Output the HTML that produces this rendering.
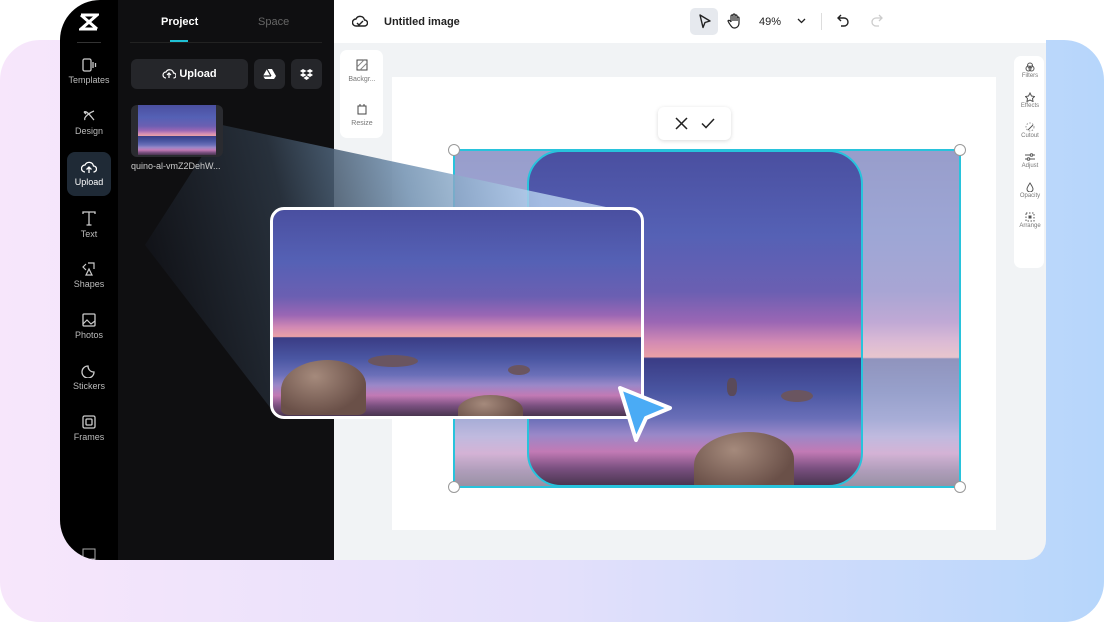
<!DOCTYPE html>
<html><head><meta charset="utf-8"><style>
*{margin:0;padding:0;box-sizing:border-box}
body{width:1104px;height:622px;overflow:hidden;background:#fff;font-family:"Liberation Sans",sans-serif;position:relative}
.abs{position:absolute}
.bg{left:0;top:40px;width:1104px;height:582px;border-radius:40px;background:linear-gradient(90deg,#f7e6fb 0%,#e4e0fb 50%,#b6d6fb 100%)}
.app{left:60px;top:0;width:986px;height:560px;background:#f1f3f5;border-radius:40px 0 20px 40px;overflow:hidden}
.side{left:0;top:0;width:58px;height:560px;background:#000}
.panel{left:58px;top:0;width:216px;height:560px;background:#0f0f11}
.top{left:274px;top:0;width:712px;height:43px;background:#fff}
.nav{width:58px;text-align:center;color:#bbb;font-size:9px;left:0}
.nav svg{display:block;margin:0 auto 3px}
.scene{background:linear-gradient(180deg,#4a4fa0 0%,#5561b5 25%,#6b5fb2 42%,#9a66b4 51%,#d28ab4 57%,#eaa0a6 61.5%,#3a3c85 62%,#4a56a2 72%,#6a6fb8 80%,#9a88c8 85%,#c27ab5 90%,#7a5080 95%,#4a3550 100%)}
.rt{font-size:6px;color:#777;text-align:center;width:30px}
.rt svg{display:block;margin:0 auto 1px}
.rock{background:radial-gradient(ellipse at 40% 30%,#a58a7c,#6a5048 70%)}
</style></head><body>
<div class="abs bg"></div>
<div class="abs app">
 <div class="abs side">
  <svg class="abs" style="left:19px;top:13px" width="20" height="18" viewBox="0 0 20 18"><path d="M2 2h16L2 16h16M2 2l16 14" stroke="#fff" stroke-width="3" fill="none"/></svg>
  <div class="abs" style="left:17px;top:42px;width:24px;height:1px;background:#333"></div>
  <div class="abs nav" style="top:58px"><svg width="16" height="14"><rect x="2" y="1" width="8" height="12" rx="1.5" stroke="#ccc" fill="none" stroke-width="1.3"/><path d="M12 4v6M14.5 5v4" stroke="#ccc" stroke-width="1.3"/></svg>Templates</div>
  <div class="abs nav" style="top:109px"><svg width="16" height="14"><path d="M3 3c3-2 8 6 10 8M4 11c-2-3 6-8 9-9M3 3l2 2" stroke="#ccc" fill="none" stroke-width="1.3"/></svg>Design</div>
  <div class="abs" style="left:7px;top:152px;width:44px;height:44px;border-radius:8px;background:#1f2a36"></div>
  <div class="abs nav" style="top:160px;color:#fff"><svg width="16" height="14"><path d="M4 12a3.5 3.5 0 0 1 0-7 4.5 4.5 0 0 1 8.5 1 3 3 0 0 1 0 6M8 13V7M5.5 9.5L8 7l2.5 2.5" stroke="#fff" fill="none" stroke-width="1.3"/></svg>Upload</div>
  <div class="abs nav" style="top:211px"><svg width="16" height="15"><path d="M2 3V1h12v2M8 1v13M5.5 14h5" stroke="#ccc" fill="none" stroke-width="1.3"/></svg>Text</div>
  <div class="abs nav" style="top:262px"><svg width="16" height="14"><path d="M5 2l-3 3 3 3M7 1h6v6M5 13l3-6 3 6z" stroke="#ccc" fill="none" stroke-width="1.2"/></svg>Shapes</div>
  <div class="abs nav" style="top:313px"><svg width="16" height="14"><rect x="2" y="1" width="12" height="12" rx="1" stroke="#ccc" fill="none" stroke-width="1.3"/><path d="M2 11l4-4 4 4 4-3" stroke="#ccc" fill="none" stroke-width="1.2"/></svg>Photos</div>
  <div class="abs nav" style="top:364px"><svg width="16" height="14"><path d="M13 8A6 6 0 1 1 7 2c0 3 2 6 6 6z" stroke="#ccc" fill="none" stroke-width="1.3"/></svg>Stickers</div>
  <div class="abs nav" style="top:415px"><svg width="16" height="14"><rect x="2" y="1" width="12" height="12" rx="1.5" stroke="#ccc" fill="none" stroke-width="1.3"/><rect x="5" y="4" width="6" height="6" rx="1" stroke="#ccc" fill="none" stroke-width="1.3"/></svg>Frames</div>
  <svg class="abs" style="left:22px;top:548px" width="14" height="12"><rect x="1" y="1" width="12" height="10" stroke="#aaa" fill="none"/></svg>
 </div>
 <div class="abs panel">
  <div class="abs" style="left:43px;top:16px;color:#fff;font-size:11px;font-weight:bold">Project</div>
  <div class="abs" style="left:140px;top:16px;color:#666;font-size:11px">Space</div>
  <div class="abs" style="left:52px;top:40px;width:18px;height:2px;background:#1fc0d4"></div>
  <div class="abs" style="left:12px;top:42px;width:192px;height:1px;background:#222"></div>
  <div class="abs" style="left:13px;top:59px;width:117px;height:30px;border-radius:6px;background:#25262a;color:#fff;font-size:11px;font-weight:bold;line-height:30px;text-align:center"><svg width="14" height="12" style="vertical-align:-2px;margin-right:3px"><path d="M4 11a3 3 0 0 1 0-6 4 4 0 0 1 7.5 1 2.5 2.5 0 0 1 0 5M7 11V6M5 8l2-2 2 2" stroke="#fff" fill="none" stroke-width="1.2"/></svg>Upload</div>
  <div class="abs" style="left:136px;top:59px;width:31px;height:30px;border-radius:6px;background:#25262a"><svg class="abs" style="left:9px;top:9px" width="13" height="12"><path d="M4 1h5l4 7-2 3H2L0 8z" fill="#fff"/><path d="M4 1l4 7M0 8h8" stroke="#25262a" stroke-width="1.2"/></svg></div>
  <div class="abs" style="left:173px;top:59px;width:31px;height:30px;border-radius:6px;background:#25262a"><svg class="abs" style="left:9px;top:9px" width="13" height="12"><path d="M3 1l3.5 2L3 5 0 3zM10 1l3 2-3 2-3.5-2zM3 5l3.5 2L3 9 0 7zM10 5l3 2-3 2-3.5-2zM3.5 10l3-2 3 2-3 2z" fill="#fff"/></svg></div>
 </div>
 <div class="abs top">
  <svg class="abs" style="left:18px;top:14px" width="16" height="14"><path d="M4 12a3.5 3.5 0 0 1 0-7 4.5 4.5 0 0 1 8.5 1 3 3 0 0 1 0 6zM5 9l2 2 4-4" stroke="#222" fill="none" stroke-width="1.4"/></svg>
  <div class="abs" style="left:50px;top:16px;font-size:11px;color:#222;font-weight:bold">Untitled image</div>
  <div class="abs" style="left:356px;top:8px;width:28px;height:27px;border-radius:5px;background:#e6e9ee"></div>
  <svg class="abs" style="left:364px;top:14px" width="14" height="15"><path d="M2 1l10 6-5 1.5-2 5z" stroke="#222" fill="none" stroke-width="1.4" stroke-linejoin="round"/></svg>
  <svg class="abs" style="left:393px;top:13px" width="14" height="16"><path d="M4 9V3a1 1 0 0 1 2 0v5V2a1 1 0 0 1 2 0v6V3a1 1 0 0 1 2 0v5V5a1 1 0 0 1 2 0v5c0 3-2 5-4.5 5S4 13 2 10l-1-2c0-1 2-1 3 1" stroke="#222" fill="none" stroke-width="1.2"/></svg>
  <div class="abs" style="left:425px;top:16px;font-size:11px;color:#222">49%</div>
  <svg class="abs" style="left:463px;top:18px" width="9" height="6"><path d="M1 1l3.5 3.5L8 1" stroke="#222" fill="none" stroke-width="1.3"/></svg>
  <div class="abs" style="left:487px;top:13px;width:1px;height:17px;background:#ddd"></div>
  <svg class="abs" style="left:503px;top:14px" width="13" height="14"><path d="M4 1L1 4l3 3M1 4h6a4 4 0 0 1 0 8H4" stroke="#222" fill="none" stroke-width="1.4"/></svg>
  <svg class="abs" style="left:536px;top:14px" width="13" height="14"><path d="M9 1l3 3-3 3M12 4H6a4 4 0 0 0 0 8h3" stroke="#ccc" fill="none" stroke-width="1.3"/></svg>
 </div>
 <div class="abs" style="left:280px;top:50px;width:43px;height:88px;border-radius:7px;background:#fff"></div>
 <svg class="abs" style="left:296px;top:59px" width="12" height="12"><rect x="1" y="1" width="10" height="10" stroke="#444" fill="none"/><path d="M1 8l7-7M4 11l7-7" stroke="#888"/></svg>
 <div class="abs rt" style="left:287px;top:76px;font-size:7px">Backgr...</div>
 <svg class="abs" style="left:296px;top:103px" width="12" height="12"><path d="M2 3h8v8H2zM4 1v2M8 1v2" stroke="#444" fill="none"/></svg>
 <div class="abs rt" style="left:287px;top:120px;font-size:7px">Resize</div>
 <div class="abs" style="left:332px;top:77px;width:604px;height:453px;background:#fff"></div>
 <div class="abs" style="left:954px;top:56px;width:30px;height:212px;border-radius:7px;background:#fff"></div>
</div>
<div class="abs rt" style="left:1015px;top:62px"><svg width="10" height="10"><circle cx="5" cy="3.5" r="2.5" stroke="#555" fill="none"/><circle cx="3.5" cy="6.5" r="2.5" stroke="#555" fill="none"/><circle cx="6.5" cy="6.5" r="2.5" stroke="#555" fill="none"/></svg>Filters</div>
<div class="abs rt" style="left:1015px;top:92px"><svg width="10" height="10"><path d="M5 1l1.5 3 3 .5-2 2 .5 3L5 8 2 9.5l.5-3-2-2 3-.5z" stroke="#555" fill="none"/></svg>Effects</div>
<div class="abs rt" style="left:1015px;top:122px"><svg width="10" height="10"><circle cx="5" cy="5" r="4" stroke="#999" stroke-dasharray="1.5" fill="none"/><path d="M3 8l5-5" stroke="#555"/></svg>Cutout</div>
<div class="abs rt" style="left:1015px;top:152px"><svg width="10" height="10"><path d="M0 3h10M0 7h10" stroke="#555"/><circle cx="6.5" cy="3" r="1.3" fill="#fff" stroke="#555"/><circle cx="3.5" cy="7" r="1.3" fill="#fff" stroke="#555"/></svg>Adjust</div>
<div class="abs rt" style="left:1015px;top:182px"><svg width="10" height="10"><path d="M5 1C3 4 2 5.5 2 7a3 3 0 0 0 6 0c0-1.5-1-3-3-6z" stroke="#555" fill="none"/></svg>Opacity</div>
<div class="abs rt" style="left:1015px;top:212px"><svg width="10" height="10"><rect x="1" y="1" width="8" height="8" stroke="#555" stroke-dasharray="1.5" fill="none"/><rect x="3.5" y="3.5" width="3" height="3" fill="#555"/></svg>Arrange</div>
<div class="abs" style="left:658px;top:107px;width:73px;height:33px;border-radius:6px;background:#fff;box-shadow:0 1px 4px rgba(0,0,0,.15)"></div>
<svg class="abs" style="left:675px;top:117px" width="13" height="13"><path d="M1 1l11 11M12 1L1 12" stroke="#222" stroke-width="1.5"/></svg>
<svg class="abs" style="left:701px;top:118px" width="14" height="11"><path d="M1 5.5l4 4L13 1" stroke="#222" stroke-width="1.5" fill="none"/></svg>
<div class="abs scene" style="left:454px;top:150px;width:506px;height:337px"></div>
<div class="abs" style="left:454px;top:150px;width:506px;height:337px;background:rgba(230,236,245,.5)"></div>
<div class="abs scene" style="left:527px;top:150px;width:336px;height:337px;border-radius:34px;border:2px solid #28c3dc;overflow:hidden">
 <div class="abs rock" style="left:165px;top:280px;width:100px;height:60px;border-radius:55% 45% 10% 10%"></div>
 <div class="abs" style="left:198px;top:226px;width:10px;height:18px;border-radius:40%;background:#5a4a5a"></div>
 <div class="abs" style="left:252px;top:238px;width:32px;height:12px;border-radius:50%;background:#6a5560"></div>
</div>
<div class="abs" style="left:453px;top:149px;width:508px;height:339px;border:2px solid #28c3dc"></div>
<div class="abs" style="left:448px;top:144px;width:12px;height:12px;border-radius:50%;background:#fff;border:1px solid #999"></div>
<div class="abs" style="left:954px;top:144px;width:12px;height:12px;border-radius:50%;background:#fff;border:1px solid #999"></div>
<div class="abs" style="left:448px;top:481px;width:12px;height:12px;border-radius:50%;background:#fff;border:1px solid #999"></div>
<div class="abs" style="left:954px;top:481px;width:12px;height:12px;border-radius:50%;background:#fff;border:1px solid #999"></div>
<svg class="abs" style="left:0;top:0" width="1104" height="622"><defs><linearGradient id="g" gradientUnits="userSpaceOnUse" x1="150" y1="300" x2="640" y2="180"><stop offset="0" stop-color="#101116" stop-opacity=".95"/><stop offset=".3" stop-color="#2a3440" stop-opacity=".9"/><stop offset=".55" stop-color="#7090b0" stop-opacity=".85"/><stop offset=".8" stop-color="#b8d4f0" stop-opacity=".8"/><stop offset="1" stop-color="#dcecfc" stop-opacity=".7"/></linearGradient></defs><polygon points="222,125 620,210 272,410 145,245" fill="url(#g)"/></svg>
<div class="abs" style="left:131px;top:105px;width:92px;height:52px;border-radius:6px;background:#2a2b30"></div>
<div class="abs scene" style="left:138px;top:105px;width:78px;height:50px"></div>
<div class="abs" style="left:131px;top:161px;color:#ccc;font-size:9px">quino-al-vmZ2DehW...</div>
<div class="abs scene" style="left:270px;top:207px;width:374px;height:212px;border:3px solid #fff;border-radius:14px;overflow:hidden">
 <div class="abs rock" style="left:8px;top:150px;width:85px;height:55px;border-radius:55% 45% 10% 10%"></div>
 <div class="abs rock" style="left:185px;top:185px;width:65px;height:30px;border-radius:50% 50% 0 0"></div>
 <div class="abs" style="left:95px;top:145px;width:50px;height:12px;border-radius:50%;background:#6a5560"></div>
 <div class="abs" style="left:235px;top:155px;width:22px;height:10px;border-radius:50%;background:#6a5560"></div>
</div>
<svg class="abs" style="left:612px;top:380px" width="66" height="66"><path d="M8 8L58 28 34 38 24 60z" fill="#4aabf5" stroke="#fff" stroke-width="4" stroke-linejoin="round"/></svg>
</body></html>
